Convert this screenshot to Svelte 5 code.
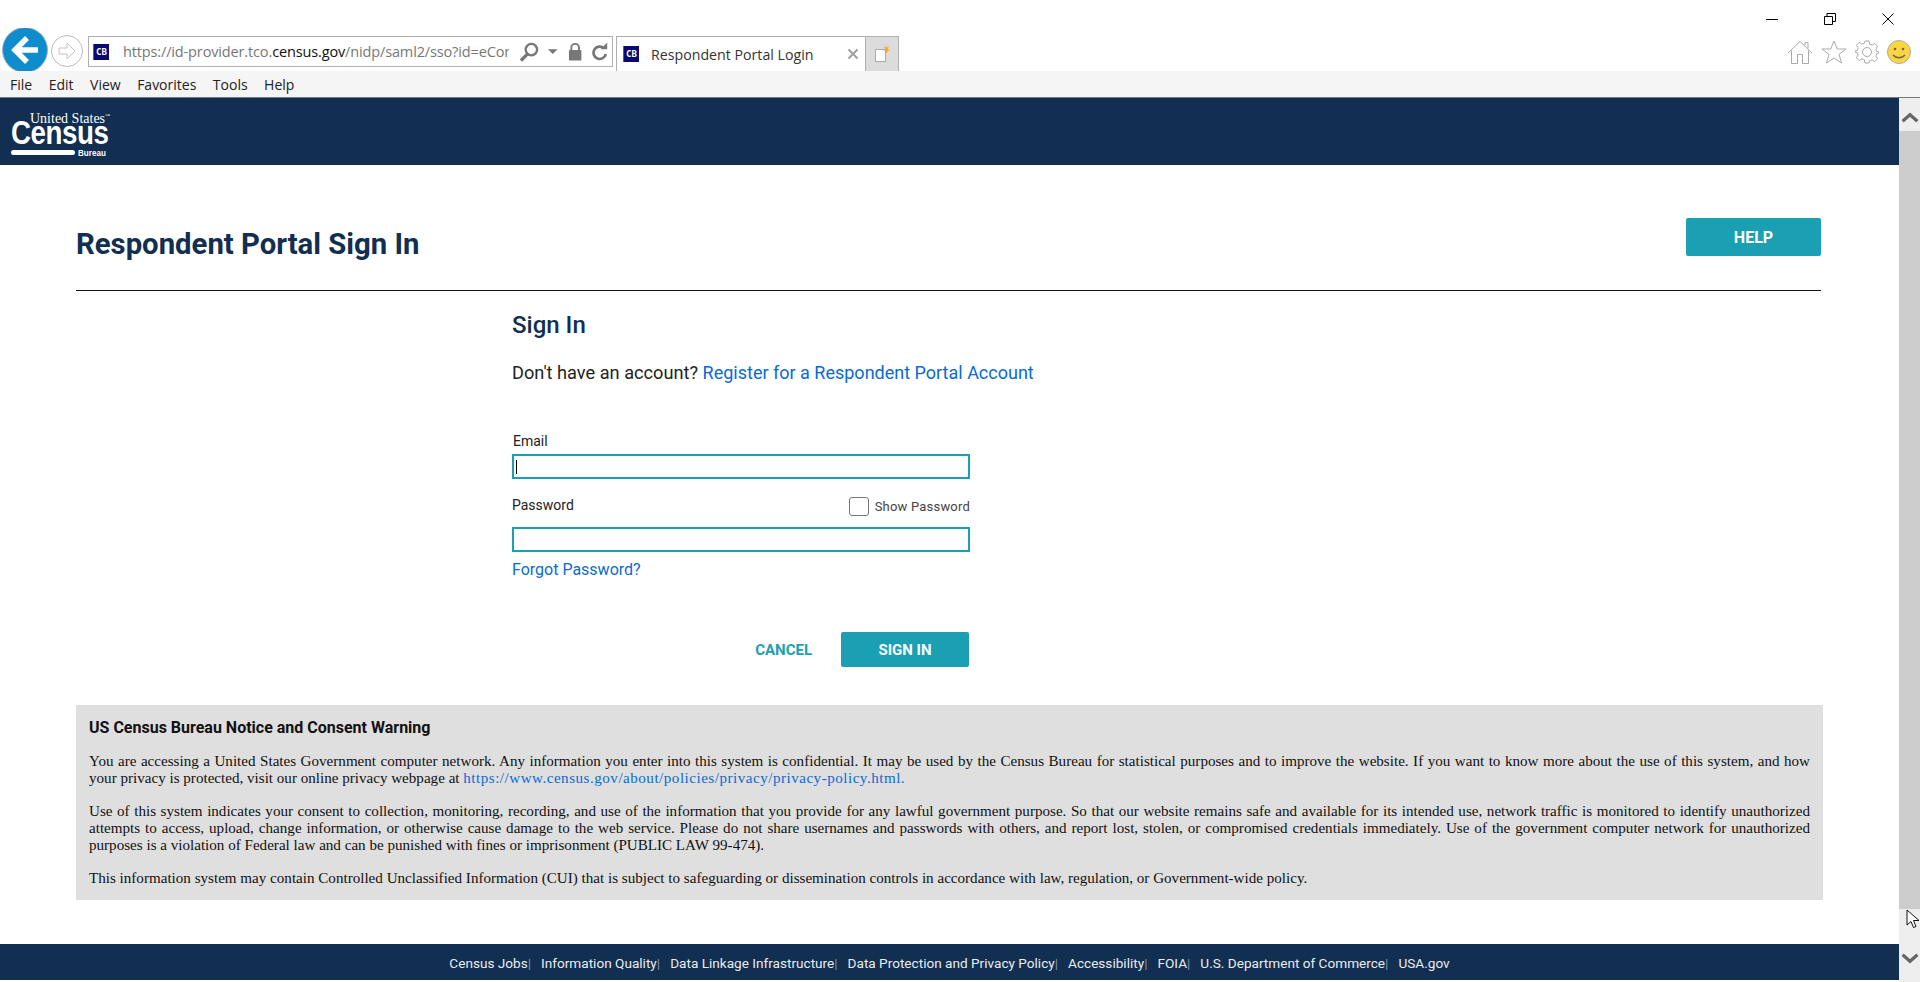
<script>
  const menus = ['File', 'Edit', 'View', 'Favorites', 'Tools', 'Help'];
  const footerLinks = [
    'Census Jobs',
    'Information Quality',
    'Data Linkage Infrastructure',
    'Data Protection and Privacy Policy',
    'Accessibility',
    'FOIA',
    'U.S. Department of Commerce',
    'USA.gov'
  ];
</script>

<div class="window">
  <!-- browser chrome -->
  <div class="caption">
    <svg class="cap" width="12" height="12" viewBox="0 0 12 12"><path d="M0 6.5h12" stroke="#000" fill="none" /></svg>
    <svg class="cap" width="12" height="12" viewBox="0 0 12 12"><path d="M.5 3.5h8v8h-8zM3 3.5V.5h8.500v8H8.500" stroke="#000" fill="none" /></svg>
    <svg class="cap" width="12" height="12" viewBox="0 0 12 12"><path d="M.5.5l11 11M11.500.5l-11 11" stroke="#000" fill="none" /></svg>
  </div>
  <div class="toolbar">
    <div class="nav">
      <svg width="48" height="43" viewBox="0 0 48 43">
        <circle cx="24" cy="22" r="22.500" fill="#0f8ccb" stroke="#9fb4c0" />
        <path d="M26 10L14 22l12 12M15 22h22" fill="none" stroke="#fff" stroke-width="5.500" />
      </svg>
      <svg class="fwd" width="32" height="32" viewBox="0 0 32 32">
        <circle cx="16" cy="16" r="15.500" fill="#fff" stroke="#bbb" />
        <path d="M16 8l8 8-8 8v-5H8v-6h8z" fill="none" stroke="#c4c4c4" />
      </svg>
    </div>
    <div class="address">
      <span class="fav">CB</span>
      <span class="url">https://id-provider.tco.<b>census.gov</b>/nidp/saml2/sso?id=eCor</span>
      <svg width="22" height="22" viewBox="0 0 22 22"><circle cx="13" cy="8.500" r="6" fill="none" stroke="#777" stroke-width="2.500" /><path d="M9 13l-7 7" stroke="#777" stroke-width="3.500" /></svg>
      <svg class="drop" width="10" height="6" viewBox="0 0 10 6"><path d="M0 0h10L5 5z" fill="#777" /></svg>
      <svg class="lock" width="15" height="20" viewBox="0 0 15 20"><path d="M3.500 9V5.500a4 4 0 018 0V9" fill="none" stroke="#777" stroke-width="2" /><rect x="1" y="8" width="13" height="11" rx="1" fill="#777" /></svg>
      <svg width="18" height="20" viewBox="0 0 18 20"><path d="M13.500 6A6.500 6.500 0 1015.500 12" fill="none" stroke="#777" stroke-width="2.800" /><path d="M10 7h7V0z" fill="#777" /></svg>
    </div>
    <div class="tab">
      <span class="fav">CB</span>
      <span class="tab-title">Respondent Portal Login</span>
      <svg width="12" height="12" viewBox="0 0 12 12"><path d="M1.500 1.500l9 9M10.500 1.500l-9 9" stroke="#a0a0a0" stroke-width="2" /></svg>
    </div>
    <div class="new-tab">
      <svg width="16" height="18" viewBox="0 0 16 18">
        <rect x="1.500" y="4.500" width="10" height="12" fill="#fff" stroke="#aaa" />
        <path d="M11.500 0l1 2.500L15 1.500 13.500 4 16 5l-2.500 1-1 2.500-1-2.500L9 5l2.500-1L10 1.500l1.500 1z" fill="#f6a623" />
      </svg>
    </div>
    <div class="tools">
      <svg width="26" height="24" viewBox="0 0 26 24"><path d="M1 13L13 1.500 25 13M4.500 10.500v13h6v-9h5v9h6v-13M18 5.500V2.500h3v6" fill="#fff" stroke="#aaa" /></svg>
      <svg width="26" height="24" viewBox="0 0 26 24"><path d="M13 1l3.300 8H25l-7 5.500 2.600 8.500L13 18l-7.600 5L8 14.500 1 9h8.700z" fill="#fff" stroke="#aaa" /></svg>
      <svg width="24" height="24" viewBox="0 0 24 24"><circle cx="12" cy="12" r="4.500" fill="none" stroke="#aaa" /><path d="M10 1h4l.6 3.200 2.500 1 2.700-1.800 2.800 2.800L20.800 9l1 2.500L24 12v1l-2.200.6-1 2.500 1.800 2.700-2.800 2.800-2.700-1.800-2.500 1L14 23h-4l-.6-3.200-2.500-1-2.700 1.800-2.800-2.800L3.200 15l-1-2.500L0 12v-1l2.200-.6 1-2.500L1.400 5.200l2.800-2.800 2.700 1.800 2.500-1z" fill="none" stroke="#aaa" /></svg>
      <svg width="24" height="24" viewBox="0 0 24 24"><circle cx="12" cy="12" r="11.500" fill="#fcd53f" stroke="#aaa" /><circle cx="8" cy="9" r="1.300" fill="#666" /><circle cx="16" cy="9" r="1.300" fill="#666" /><path d="M6 15c3 3.500 9 3.500 12 0" fill="none" stroke="#666" stroke-width="1.500" /></svg>
    </div>
  </div>
  <div class="menubar">
    {#each menus as m}
      <span>{m}</span>
    {/each}
  </div>

  <div class="viewport">
    <div class="page">
      <header class="banner">
        <div class="logo">
          <span class="logo-us">United States<sup>™</sup></span>
          <span class="logo-census">Census</span>
          <div class="logo-foot"><i></i><span>Bureau</span></div>
        </div>
      </header>

      <main>
        <div class="title-row">
          <h1>Respondent Portal Sign In</h1>
          <button class="help">HELP</button>
        </div>

        <form class="signin">
          <h2>Sign In</h2>
          <p class="register">Don't have an account? <a href="#top">Register for a Respondent Portal Account</a></p>

          <label class="email-label" for="email">Email</label>
          <div class="input-wrap">
            <input id="email" type="text" />
            <span class="caret"></span>
          </div>

          <div class="pw-row">
            <label for="password">Password</label>
            <span class="show"><span class="box"></span>Show Password</span>
          </div>
          <input id="password" type="password" />

          <a class="forgot" href="#top">Forgot Password?</a>

          <div class="actions">
            <button type="button" class="cancel">CANCEL</button>
            <button type="button" class="submit">SIGN IN</button>
          </div>
        </form>

        <section class="notice">
          <h3>US Census Bureau Notice and Consent Warning</h3>
          <p><span class="full-line">You are accessing a United States Government computer network. Any information you enter into this system is confidential. It may be used by the Census Bureau for statistical purposes and to improve the website. If you want to know more about the use of this system, and how</span> your privacy is protected, visit our online privacy webpage at <a href="#top">https://www.census.gov/about/policies/privacy/privacy-policy.html.</a></p>
          <p>Use of this system indicates your consent to collection, monitoring, recording, and use of the information that you provide for any lawful government purpose. So that our website remains safe and available for its intended use, network traffic is monitored to identify unauthorized attempts to access, upload, change information, or otherwise cause damage to the web service. Please do not share usernames and passwords with others, and report lost, stolen, or compromised credentials immediately. Use of the government computer network for unauthorized purposes is a violation of Federal law and can be punished with fines or imprisonment (PUBLIC LAW 99-474).</p>
          <p>This information system may contain Controlled Unclassified Information (CUI) that is subject to safeguarding or dissemination controls in accordance with law, regulation, or Government-wide policy.</p>
        </section>
      </main>

      <footer>
        {#each footerLinks as link, i}
          <span class="flink">{link}</span>{#if i < footerLinks.length - 1}<span class="sep">|</span>{/if}
        {/each}
      </footer>
    </div>

    <div class="scrollbar">
      <svg width="20" height="14" viewBox="0 0 20 14"><path d="M2 11l8-7 8 7" fill="none" stroke="#666" stroke-width="3.500" /></svg>
      <div class="thumb"></div>
      <svg width="20" height="14" viewBox="0 0 20 14"><path d="M2 3l8 7 8-7" fill="none" stroke="#666" stroke-width="3.500" /></svg>
      <svg class="pointer" width="14" height="20" viewBox="0 0 14 20"><path d="M1 1v15l4-3.500 2.500 6 2.500-1-2.500-6H13z" fill="#fff" stroke="#111" /></svg>
    </div>
  </div>
</div>

<style>
  :global(body) {
    margin: 0;
    overflow: hidden;
    background: #fff;
  }

  .window {
    width: 1920px;
    height: 982px;
    display: flex;
    flex-direction: column;
    font-family: Roboto, sans-serif;
    color: #222;
  }

  /* browser chrome */
  .caption {
    height: 28px;
    display: flex;
    justify-content: flex-end;
    align-items: flex-end;
    gap: 46px;
    padding-right: 26px;
    box-sizing: border-box;
    padding-bottom: 3px;
  }

  .toolbar {
    height: 43px;
    display: flex;
    align-items: flex-start;
    font-family: 'Open Sans', sans-serif;
  }

  .nav {
    width: 88px;
    flex: none;
    display: flex;
    padding-left: 1px;
    box-sizing: border-box;
  }

  .nav svg {
    flex: none;
    overflow: hidden;
  }

  .fwd {
    margin: 7px 0 0 2px;
  }

  .address {
    margin-top: 8px;
    width: 525px;
    height: 31px;
    box-sizing: border-box;
    border: 1px solid #b0b0b0;
    display: flex;
    align-items: center;
    padding: 0 4px;
    gap: 4px;
  }

  .fav {
    width: 16px;
    height: 16px;
    flex: none;
    background: #0a0a6e;
    color: #fff;
    font: bold 9px/16px 'DejaVu Sans Mono', monospace;
    text-align: center;
    border-left: 1px solid #c33;
    box-sizing: border-box;
  }

  .url {
    width: 386px;
    margin-left: 10px;
    margin-right: 6px;
    font-size: 14.500px;
    letter-spacing: -0.14px;
    color: #777;
    white-space: nowrap;
    overflow: hidden;
    flex: none;
  }

  .url b {
    font-weight: 400;
    color: #111;
  }

  .drop {
    margin: 0 6px 0 4px;
  }

  .lock {
    margin-right: 5px;
  }

  .tab {
    margin: 8px 0 0 3px;
    width: 249px;
    height: 35px;
    box-sizing: border-box;
    border: 1px solid #b0b0b0;
    border-bottom: 0;
    border-right: 0;
    display: flex;
    align-items: center;
    padding: 0 6px 0 6px;
  }

  .tab-title {
    flex: 1;
    margin-left: 12px;
    font-size: 14.200px;
    color: #333;
  }

  .new-tab {
    margin-top: 8px;
    width: 34px;
    height: 35px;
    box-sizing: border-box;
    background: #dcdcdc;
    border: 1px solid #b0b0b0;
    border-bottom: 0;
    display: flex;
    align-items: center;
    justify-content: center;
  }

  .tools {
    margin-left: auto;
    margin-right: 9px;
    margin-top: 12px;
    display: flex;
    gap: 8px;
  }

  .menubar {
    height: 27px;
    box-sizing: border-box;
    background: #f5f5f5;
    border-bottom: 1px solid #777;
    display: flex;
    align-items: center;
    gap: 16.500px;
    padding: 0 0 0 10px;
    font-family: 'Open Sans', sans-serif;
    font-size: 14px;
    color: #222;
  }

  .viewport {
    flex: 1;
    display: flex;
    min-height: 0;
  }

  .page {
    width: 1899px;
    display: flex;
    flex-direction: column;
  }

  .banner {
    height: 67px;
    flex: none;
    background: #122e51;
    padding: 13px 0 0 11px;
    box-sizing: border-box;
  }

  .logo {
    width: 100px;
    color: #fff;
    display: flex;
    flex-direction: column;
  }

  .logo-us {
    font: 14px/10px 'Liberation Serif', serif;
    margin-left: 19px;
    white-space: nowrap;
  }

  .logo-us sup {
    font-size: 5px;
  }

  .logo-census {
    font: bold 33px/24px 'Liberation Sans', sans-serif;
    transform: scaleX(0.84);
    transform-origin: left;
    letter-spacing: -0.5px;
    margin-top: -3px;
  }

  .logo-foot {
    display: flex;
    align-items: center;
    gap: 3px;
    margin-top: 3px;
  }

  .logo-foot i {
    width: 64px;
    height: 5px;
    border-radius: 2.500px;
    background: #fff;
  }

  .logo-foot span {
    font: bold 9.500px/9px 'Liberation Sans', sans-serif;
    transform: scaleX(0.85);
    transform-origin: left;
  }

  main {
    flex: 1;
    padding: 0 78px 0 76px;
    min-height: 0;
  }

  .title-row {
    height: 126px;
    box-sizing: border-box;
    border-bottom: 1px solid #111;
    display: flex;
    justify-content: space-between;
    align-items: flex-start;
  }

  h1 {
    margin: 60px 0 0;
    font-size: 29.300px;
    line-height: 38px;
    font-weight: 700;
    color: #122e51;
  }

  .help {
    margin-top: 53px;
    width: 135px;
    height: 38px;
    background: #1a9fb3;
    border: 0;
    border-radius: 2px;
    color: #fff;
    font: 700 16px Roboto, sans-serif;
  }

  .signin {
    width: 458px;
    margin-left: 436px;
    display: flex;
    flex-direction: column;
    align-items: flex-start;
  }

  h2 {
    margin: 18px 0 0;
    font-size: 24px;
    line-height: 32px;
    font-weight: 500;
    color: #122e51;
  }

  .register {
    margin: 20px 0 0;
    font-size: 18.200px;
    line-height: 24px;
    white-space: nowrap;
  }

  .register a {
    font-size: 18px;
  }

  a {
    color: #0a6ad6;
    text-decoration: none;
  }

  label {
    font-size: 14px;
    line-height: 18px;
    color: #222;
  }

  .email-label {
    margin: 47px 0 0 1px;
  }

  .input-wrap {
    position: relative;
    width: 100%;
    margin-top: 4px;
    display: flex;
  }

  input {
    width: 100%;
    height: 25px;
    box-sizing: border-box;
    border: 2px solid #1a9fb3;
    background: #fff;
    outline: 0;
    margin: 0;
    padding: 0;
    border-radius: 0;
  }

  .caret {
    position: absolute;
    left: 4px;
    top: 6px;
    width: 1px;
    height: 14px;
    background: #000;
  }

  .pw-row {
    width: 100%;
    margin-top: 14px;
    display: flex;
    justify-content: space-between;
    align-items: center;
    height: 24px;
  }

  .show {
    display: flex;
    align-items: center;
    font-size: 13px;
    color: #444;
    letter-spacing: 0.2px;
    padding-top: 2px;
  }

  .box {
    width: 18px;
    height: 17px;
    border: 1px solid #777;
    border-radius: 3px;
    margin-right: 6px;
  }

  #password {
    margin-top: 10px;
  }

  .forgot {
    margin-top: 7px;
    font-size: 16px;
    line-height: 21px;
  }

  .actions {
    width: 100%;
    margin-top: 52px;
    display: flex;
    justify-content: flex-end;
    align-items: center;
  }

  .actions button {
    font: 700 15px Roboto, sans-serif;
    border: 0;
    height: 35px;
    border-radius: 2px;
  }

  .cancel {
    background: none;
    color: #1a9fb3;
    margin-right: 29px;
    padding: 0;
  }

  .submit {
    width: 128px;
    background: #1a9fb3;
    color: #fff;
    margin-right: 1px;
  }

  .notice {
    margin: 38px -2px 0 0;
    height: 195px;
    box-sizing: border-box;
    background: #dfdfdf;
    padding: 13px 13px 0;
    color: #111;
  }

  h3 {
    margin: 0 0 15px;
    font-size: 16px;
    line-height: 20px;
    font-weight: 700;
    color: #111;
  }

  .notice p {
    margin: 0 0 16px;
    font: 15.100px/17px 'Liberation Serif', serif;
    text-align: justify;
  }

  .full-line {
    display: block;
    text-align-last: justify;
  }

  .notice a {
    letter-spacing: 0.5px;
  }

  footer {
    height: 36px;
    margin-bottom: 2px;
    padding-top: 1px;
    box-sizing: border-box;
    flex: none;
    background: #122e51;
    color: #e8edf2;
    font-size: 13.600px;
    display: flex;
    align-items: center;
    justify-content: center;
    white-space: pre;
  }

  .sep {
    margin-right: 10px;
    color: #7f93aa;
  }

  .scrollbar {
    position: relative;
    width: 21px;
    background: #eee;
    display: flex;
    flex-direction: column;
    align-items: center;
    padding: 13px 0 17px;
    box-sizing: border-box;
  }

  .thumb {
    width: 100%;
    height: 778px;
    margin: 7px 0 43px;
    flex: none;
    background: #cdcdcd;
  }

  .pointer {
    position: absolute;
    left: 7px;
    top: 811px;
  }
</style>
